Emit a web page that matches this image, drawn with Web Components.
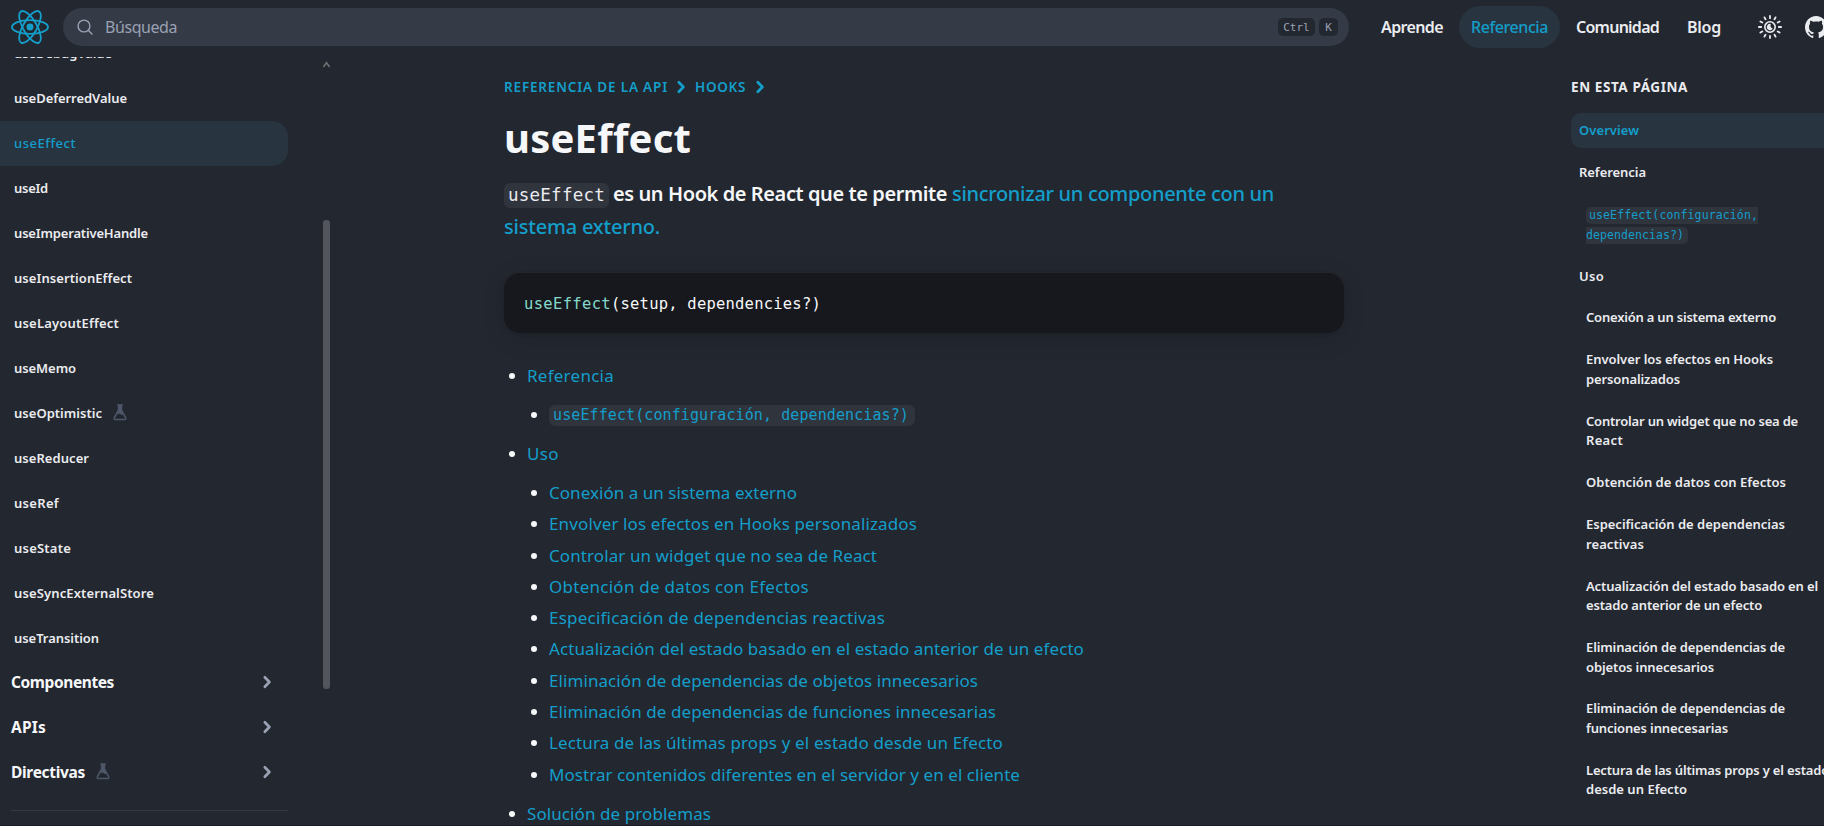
<!DOCTYPE html>
<html lang="es">
<head>
<meta charset="utf-8">
<title>useEffect – React</title>
<style>
html,body{margin:0;height:100%;overflow:hidden;background:#23272f}
body{font-family:"Noto Sans","Open Sans",sans-serif;color:#f6f7f9}
</style>
</head>
<body>
<docs-page></docs-page>
<script>
const define = (name, html, setup) => {
  const t = document.createElement('template');
  t.innerHTML = html;
  customElements.define(name, class extends HTMLElement {
    constructor() {
      super();
      this.attachShadow({mode: 'open'}).append(t.content.cloneNode(true));
    }
    connectedCallback() { if (setup) setup(this, this.shadowRoot); }
  });
};

// Text run whose tracking is tuned so that it occupies the width given in "w".
define('fit-text', `<style>:host{display:inline-block;white-space:pre}span{display:inline-block}</style><span><slot></slot></span>`, (el, root) => {
  const s = root.querySelector('span'), w = +el.getAttribute('w'), n = el.textContent.length;
  if (!w) return;
  s.style.letterSpacing = '0px';
  const d = (w - s.getBoundingClientRect().width) / n;
  s.style.letterSpacing = d.toFixed(3) + 'px';
});

define('chevron-icon', `<style>:host{display:inline-flex}svg{display:block;width:20px;height:20px}</style>
<svg viewBox="0 0 20 20" fill="none" stroke="currentColor" stroke-width="2.700" stroke-linecap="round" stroke-linejoin="round"><path d="M7.800 5.200l4.600 4.800-4.600 4.800"/></svg>`);

define('flask-icon', `<style>:host{display:inline-flex;color:#4e5769}svg{display:block}</style>
<svg width="14" height="17" viewBox="0 0 14 17"><path d="M4.200 1h5.600M5.600 1.500v4.300L1.400 13.600q-.8 1.900 1 1.900h9.200q1.800 0 1-1.900L8.400 5.800V1.500" fill="none" stroke="currentColor" stroke-width="1.500"/><path d="M5.600 1h2.800v5l2.400 4.400-2 .7-2.200-1.500-2.700.9 1.700-4.300z" fill="currentColor"/></svg>`);

define('top-nav-link', `<style>
:host{display:flex;align-items:center;height:42px;padding:0 12px;border-radius:21px;font-size:16px;font-weight:600;color:#ebecf0}
:host([active]){background:#283541;color:#149eca;font-weight:500}
</style><slot></slot>`);

define('site-header', `<style>
:host{display:flex;align-items:center;height:57px;box-sizing:border-box;padding:0 0 3px 11px;width:1840px}
.logo{display:block;width:38px;height:36px;color:#149eca;flex:none}
.search{display:flex;align-items:center;width:1286px;height:38px;margin-left:14px;box-sizing:border-box;padding:0 11px 0 14px;background:#343a46;border-radius:19px;color:#99a1b3;font-size:16px;flex:none}
.search > fit-text{margin-left:12px}
kbd{font:11px "DejaVu Sans Mono",monospace;background:#23272f;color:#99a1b3;border-radius:5px;height:18px;display:flex;align-items:center;justify-content:center;margin-left:4px;flex:none}
.grow{flex:1}
nav{display:flex;margin-left:20px;gap:4px}
.icons{display:flex;align-items:center;margin-left:25px;color:#ebecf0}
.icons svg{display:block}
</style>
<svg class="logo" viewBox="-11.5 -10.900 23 21.800"><circle r="2.100" fill="currentColor"/><g fill="none" stroke="currentColor" stroke-width="1.100"><ellipse rx="10.900" ry="4.200"/><ellipse rx="10.900" ry="4.200" transform="rotate(60)"/><ellipse rx="10.900" ry="4.200" transform="rotate(120)"/></g></svg>
<div class="search">
<svg width="16" height="16" viewBox="0 0 16 16" fill="none" stroke="currentColor" stroke-width="1.400" stroke-linecap="round"><circle cx="7" cy="7" r="5.900"/><path d="M11.200 11.200L15 15"/></svg>
<fit-text w="72">Búsqueda</fit-text><span class="grow"></span>
<kbd style="width:37px">Ctrl</kbd><kbd style="width:19px">K</kbd>
</div>
<nav>
<top-nav-link><fit-text w="62">Aprende</fit-text></top-nav-link>
<top-nav-link active><fit-text w="77">Referencia</fit-text></top-nav-link>
<top-nav-link><fit-text w="83">Comunidad</fit-text></top-nav-link>
<top-nav-link><fit-text w="34">Blog</fit-text></top-nav-link>
</nav>
<div class="icons">
<svg width="24" height="24" viewBox="-12 -12 24 24" fill="none" stroke="currentColor"><circle r="5.200" stroke-width="1.600"/><path d="M.9-3.100a3.200 3.200 0 1 0 2 4.600A3 3 0 0 1 .9-3.100z" fill="currentColor" stroke="none"/><path stroke-width="1.800" stroke-linecap="round" d="M0-11.100V-8.800M0 11.100V8.800M-11.100 0H-8.800M11.100 0H8.800M5.550-9.600L4.500-7.700M-5.550-9.600L-4.500-7.700M5.550 9.600L4.500 7.700M-5.550 9.600L-4.500 7.700M9.600-5.550L7.700-4.500M-9.600-5.550L-7.700-4.500M9.600 5.550L7.700 4.500M-9.600 5.550L-7.700 4.500"/></svg>
<svg style="margin-left:22px" width="24" height="24" viewBox="0 0 24 24" fill="currentColor"><path d="M12 2C6.480 2 2 6.590 2 12.250c0 4.530 2.870 8.370 6.840 9.730.5.090.68-.22.680-.49v-1.730c-2.780.62-3.370-1.370-3.370-1.370-.45-1.180-1.110-1.500-1.110-1.500-.91-.63.070-.62.070-.62 1 .070 1.530 1.060 1.530 1.060.89 1.560 2.340 1.110 2.910.85.090-.66.350-1.110.63-1.370-2.220-.26-4.550-1.140-4.550-5.070 0-1.120.39-2.030 1.030-2.750-.1-.26-.45-1.300.1-2.710 0 0 .84-.28 2.750 1.050A9.300 9.300 0 0 1 12 6.990c.85 0 1.710.12 2.510.34 1.910-1.330 2.750-1.050 2.750-1.050.55 1.410.2 2.450.1 2.710.64.720 1.030 1.630 1.030 2.750 0 3.940-2.340 4.810-4.570 5.060.36.320.68.940.68 1.900v2.810c0 .27.180.59.690.49A10.200 10.200 0 0 0 22 12.250C22 6.590 17.520 2 12 2z" transform="translate(-1.200 -1.200) scale(1.100)"/></svg>
</div>`);

define('nav-item', `<style>
:host{display:flex;align-items:center;height:45px;box-sizing:border-box;width:288px;padding:0 21px 2px 14px;font-size:13px;font-weight:600;color:#ebecf0;border-radius:0 16px 16px 0}
:host([active]){background:#283541;color:#149eca;font-weight:500}
:host([section]){font-size:15.500px;font-weight:700;color:#f6f7f9;padding:0 11px 4px}
flask-icon,chevron-icon{display:none}
:host([canary]) flask-icon{display:inline-flex;margin-left:11px}
:host([section]) chevron-icon{display:inline-flex;margin-left:auto;color:#99a1b3}
</style><slot></slot><flask-icon></flask-icon><chevron-icon></chevron-icon>`);

define('side-nav', `<style>
:host{display:flex;height:768px;overflow:hidden;width:334px}
.items{width:288px;margin-top:-26px}
hr{border:0;height:1px;background:#343a46;margin:14px 0 0 11px}
.bar{margin-left:35px;width:7px;padding-top:4px}
.bar svg{display:block}
.thumb{height:469px;background:#52555c;border-radius:3px;margin-top:152px}
</style>
<div class="items">
<nav-item><fit-text w="98">useDebugValue</fit-text></nav-item>
<nav-item><fit-text w="113">useDeferredValue</fit-text></nav-item>
<nav-item active><fit-text w="62">useEffect</fit-text></nav-item>
<nav-item><fit-text w="34">useId</fit-text></nav-item>
<nav-item><fit-text w="134">useImperativeHandle</fit-text></nav-item>
<nav-item><fit-text w="118">useInsertionEffect</fit-text></nav-item>
<nav-item><fit-text w="105">useLayoutEffect</fit-text></nav-item>
<nav-item><fit-text w="62">useMemo</fit-text></nav-item>
<nav-item canary><fit-text w="88">useOptimistic</fit-text></nav-item>
<nav-item><fit-text w="75">useReducer</fit-text></nav-item>
<nav-item><fit-text w="45">useRef</fit-text></nav-item>
<nav-item><fit-text w="57">useState</fit-text></nav-item>
<nav-item><fit-text w="140">useSyncExternalStore</fit-text></nav-item>
<nav-item><fit-text w="85">useTransition</fit-text></nav-item>
<nav-item section><fit-text w="103">Componentes</fit-text></nav-item>
<nav-item section><fit-text w="35">APIs</fit-text></nav-item>
<nav-item section canary><fit-text w="74">Directivas</fit-text></nav-item>
<hr>
</div>
<div class="bar"><svg width="7" height="7" viewBox="0 0 7 7" fill="none" stroke="#6c6c6c" stroke-width="1.800"><path d="M.3 6L3.500 1.800 6.700 6"/></svg><div class="thumb"></div></div>`);

define('inline-code', `<style>
:host{font-family:"DejaVu Sans Mono",monospace;background:#30343d}
</style><slot></slot>`);

define('code-panel', `<style>
:host{display:flex;align-items:center;height:60px;width:840px;box-sizing:border-box;padding:2px 20px 0;background:#16181d;border-radius:16px;box-shadow:0 5px 24px rgba(0,0,0,.12),0 1px 4px rgba(0,0,0,.08);font:15.500px "DejaVu Sans Mono",monospace}
</style><slot></slot>`);

define('doc-link', `<style>
:host{display:flex;align-items:center;height:31.300px;font-size:17px;color:#149eca}
i{width:6px;height:6px;border-radius:50%;background:#f6f7f9;margin:1px 12px 0 5px;flex:none}
:host([sub]){padding-left:22px}
</style><i></i><slot></slot>`);

define('doc-article', `<style>
:host{display:block;width:840px}
.crumbs{display:flex;align-items:center;height:20px;margin-top:20px;color:#149eca;font-size:13.500px;font-weight:600}
.crumbs chevron-icon{margin:0 4px 0 3px}
h1{font-size:40px;line-height:50px;margin:16px 0 0;font-weight:700}
.intro{font-size:20px;line-height:33px;font-weight:500;margin:13.500px 0 0}
.intro a{color:#149eca}
.intro inline-code{font-size:17.500px;line-height:25px;display:inline-block;padding:0 4px;border-radius:6px;margin-right:4px;color:#ebecf0}
.intro .es{font-weight:600;margin-right:5px}
code-panel{margin-top:30px}
.fn{color:#86d9ca}
.list{padding-top:27px}
.gap{height:7.800px}
.list inline-code{font-size:15px;line-height:21px;border-radius:6px;padding:0 6px 0 4px;margin-top:2px}
</style>
<div class="crumbs"><fit-text w="164">REFERENCIA DE LA API</fit-text><chevron-icon></chevron-icon><fit-text w="51">HOOKS</fit-text><chevron-icon style="margin-left:4px"></chevron-icon></div>
<h1><fit-text w="187">useEffect</fit-text></h1>
<p class="intro"><inline-code><fit-text w="97">useEffect</fit-text></inline-code><fit-text class="es" w="334">es un Hook de React que te permite</fit-text><a><fit-text w="322">sincronizar un componente con un</fit-text></a><br><a><fit-text w="156">sistema externo.</fit-text></a></p>
<code-panel><fit-text class="fn" w="87">useEffect</fit-text><fit-text w="210">(setup, dependencies?)</fit-text></code-panel>
<div class="list">
<doc-link><fit-text w="87">Referencia</fit-text></doc-link><div class="gap"></div>
<doc-link sub><inline-code><fit-text w="356">useEffect(configuración, dependencias?)</fit-text></inline-code></doc-link><div class="gap"></div>
<doc-link><fit-text w="32">Uso</fit-text></doc-link><div class="gap"></div>
<doc-link sub><fit-text w="248">Conexión a un sistema externo</fit-text></doc-link>
<doc-link sub><fit-text w="368">Envolver los efectos en Hooks personalizados</fit-text></doc-link>
<doc-link sub><fit-text w="328">Controlar un widget que no sea de React</fit-text></doc-link>
<doc-link sub><fit-text w="260">Obtención de datos con Efectos</fit-text></doc-link>
<doc-link sub><fit-text w="336">Especificación de dependencias reactivas</fit-text></doc-link>
<doc-link sub><fit-text w="535">Actualización del estado basado en el estado anterior de un efecto</fit-text></doc-link>
<doc-link sub><fit-text w="429">Eliminación de dependencias de objetos innecesarios</fit-text></doc-link>
<doc-link sub><fit-text w="447">Eliminación de dependencias de funciones innecesarias</fit-text></doc-link>
<doc-link sub><fit-text w="454">Lectura de las últimas props y el estado desde un Efecto</fit-text></doc-link>
<doc-link sub><fit-text w="471">Mostrar contenidos diferentes en el servidor y en el cliente</fit-text></doc-link><div class="gap"></div>
<doc-link><fit-text w="184">Solución de problemas</fit-text></doc-link>
</div>`);

define('toc-item', `<style>
:host{display:block;padding:8px 0 8px 8px;margin-bottom:6.350px;line-height:19.550px;font-size:13px;font-weight:600;color:#ebecf0;border-radius:10px 0 0 10px}
:host([sub]){padding-left:15px}
:host([active]){background:#283541;color:#149eca;margin-bottom:7.200px}
</style><slot></slot>`);

define('page-toc', `<style>
:host{display:block;width:269px}
h2{font-size:13.500px;line-height:20px;font-weight:700;margin:20px 0 15.500px;color:#ebecf0}
inline-code{display:inline-block;font-size:11.500px;line-height:17px;color:#149eca;font-weight:400;height:17px;vertical-align:middle}
.a{padding-left:3px;border-radius:5px 0 0 5px}.b{padding-right:4px;border-radius:0 5px 5px 0}
</style>
<h2><fit-text w="117">EN ESTA PÁGINA</fit-text></h2>
<toc-item active><fit-text w="60">Overview</fit-text></toc-item>
<toc-item><fit-text w="67">Referencia</fit-text></toc-item>
<toc-item sub><inline-code class="a"><fit-text w="169">useEffect(configuración,</fit-text></inline-code><br><inline-code class="b"><fit-text w="98">dependencias?)</fit-text></inline-code></toc-item>
<toc-item><fit-text w="25">Uso</fit-text></toc-item>
<toc-item sub><fit-text w="190">Conexión a un sistema externo</fit-text></toc-item>
<toc-item sub><fit-text w="187">Envolver los efectos en Hooks</fit-text><br><fit-text w="94">personalizados</fit-text></toc-item>
<toc-item sub><fit-text w="212">Controlar un widget que no sea de</fit-text><br><fit-text w="37">React</fit-text></toc-item>
<toc-item sub><fit-text w="200">Obtención de datos con Efectos</fit-text></toc-item>
<toc-item sub><fit-text w="199">Especificación de dependencias</fit-text><br><fit-text w="58">reactivas</fit-text></toc-item>
<toc-item sub><fit-text w="232">Actualización del estado basado en el</fit-text><br><fit-text w="176">estado anterior de un efecto</fit-text></toc-item>
<toc-item sub><fit-text w="199">Eliminación de dependencias de</fit-text><br><fit-text w="128">objetos innecesarios</fit-text></toc-item>
<toc-item sub><fit-text w="199">Eliminación de dependencias de</fit-text><br><fit-text w="142">funciones innecesarias</fit-text></toc-item>
<toc-item sub><fit-text w="243">Lectura de las últimas props y el estado</fit-text><br><fit-text w="101">desde un Efecto</fit-text></toc-item>`);

define('docs-page', `<style>
:host{display:block;width:1824px;height:826px;overflow:hidden;box-sizing:border-box;border-bottom:1px solid #1b1c25}
.cols{display:flex;align-items:flex-start;height:768px;overflow:hidden}
doc-article{margin-left:170px}
page-toc{margin-left:227px}
side-nav,doc-article,page-toc{flex:none}
</style>
<site-header></site-header>
<div class="cols"><side-nav></side-nav><doc-article></doc-article><page-toc></page-toc></div>`);
</script>
</body>
</html>
